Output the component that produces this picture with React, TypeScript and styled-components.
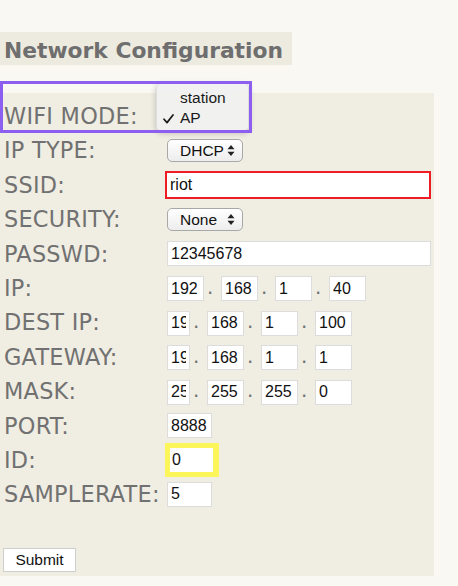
import React from 'react';
import styled, { createGlobalStyle } from 'styled-components';

const GlobalStyle = createGlobalStyle`
  html, body {
    margin: 0;
    padding: 0;
    background: #f9f8f3;
  }
  body {
    font-family: "DejaVu Sans", Verdana, sans-serif;
  }
`;

const Page = styled.div`
  padding-top: 32px;
  min-height: 586px;
  box-sizing: border-box;
`;

const Heading = styled.h1`
  display: block;
  box-sizing: border-box;
  height: 33px;
  width: 292px;
  margin: 0;
  padding: 4px 0 0 4px;
  background: #edeadf;
  color: #6e6e6e;
  font-size: 21.8px;
  font-weight: bold;
  line-height: 29px;
  white-space: nowrap;
  overflow: hidden;
`;

const Panel = styled.form`
  position: relative;
  box-sizing: border-box;
  width: 434px;
  margin-top: 28px;
  padding: 6px 0 4px 4px;
  background: #f0ede3;
`;

const FieldGrid = styled.div`
  display: grid;
  grid-template-columns: 163px 1fr;
  grid-auto-rows: 34.4px;
  align-items: center;
`;

const Label = styled.label`
  color: #717171;
  font-size: 22.4px;
  letter-spacing: 0.25px;
  line-height: 1;
  white-space: nowrap;
`;

const Field = styled.div`
  display: flex;
  align-items: center;
`;

const IpGroup = styled.div`
  display: flex;
  align-items: baseline;
`;

const TextInput = styled.input<{ $w?: number; $mark?: 'red' | 'yellow' }>`
  box-sizing: border-box;
  width: ${({ $w }) => ($w ? `${$w}px` : '264px')};
  height: 25px;
  padding: 0 3px;
  border: 1px solid #dcdcdc;
  background: #fff;
  color: #111;
  font-family: "Liberation Sans", Arial, sans-serif;
  font-size: 16px;
  outline: none;

  ${({ $mark }) => $mark === 'red' && `
    height: 28px;
    margin-left: -2px;
    border: 2px solid #ee1c24;
    padding: 0 3px;
  `}

  ${({ $mark }) => $mark === 'yellow' && `
    height: 34px;
    margin-left: -2px;
    border: 5px solid #fdf65a;
    border-right-width: 6px;
    padding: 0 2px;
  `}
`;

const Dot = styled.span`
  display: inline-block;
  width: 17px;
  padding-left: 3px;
  box-sizing: border-box;
  color: #717171;
  font-size: 20px;
`;

const SelectWrap = styled.span`
  position: relative;
  display: inline-flex;
`;

const Select = styled.select`
  appearance: none;
  -webkit-appearance: none;
  box-sizing: border-box;
  width: 76px;
  height: 23px;
  padding: 0 0 0 12px;
  border: 1px solid #a8a8a8;
  border-radius: 5px;
  background: linear-gradient(#ffffff, #ededed);
  color: #111;
  font-family: "Liberation Sans", Arial, sans-serif;
  font-size: 15.5px;
`;

const Arrows = styled.svg`
  position: absolute;
  right: 8px;
  top: 6px;
  pointer-events: none;
`;

const SubmitRow = styled.div`
  margin-top: 36px;
`;

const SubmitButton = styled.button`
  box-sizing: border-box;
  width: 73px;
  height: 24px;
  margin-left: -1px;
  padding: 0;
  border: 1px solid #cfcfcf;
  background: #fff;
  color: #111;
  font-family: "Liberation Sans", Arial, sans-serif;
  font-size: 15.5px;
`;

const Highlight = styled.div`
  position: absolute;
  top: -12px;
  left: 0;
  width: 252px;
  height: 52px;
  box-sizing: border-box;
  border: 3px solid #8d5ff1;
  pointer-events: none;
  z-index: 2;
`;

const Menu = styled.ul`
  position: absolute;
  top: -10px;
  left: 156px;
  width: 93px;
  height: 48px;
  box-sizing: border-box;
  margin: 0;
  padding: 4px 0;
  list-style: none;
  background: rgba(241, 241, 241, 0.97);
  border: 1px solid rgba(0, 0, 0, 0.08);
  border-radius: 5px;
  box-shadow: 0 2px 6px rgba(0, 0, 0, 0.22);
  font-family: "Liberation Sans", Arial, sans-serif;
  font-size: 15.5px;
  color: #1a1a1a;
  z-index: 1;
`;

const MenuItem = styled.li`
  position: relative;
  height: 20px;
  line-height: 20px;
  padding-left: 23px;
`;

const Check = styled.svg`
  position: absolute;
  left: 6px;
  top: 6px;
`;

function SelectArrows() {
  return (
    <Arrows width="8" height="11" viewBox="0 0 8 11">
      <path d="M4 0 L7.5 4.3 L0.5 4.3 Z" fill="#222" />
      <path d="M4 11 L7.5 6.7 L0.5 6.7 Z" fill="#222" />
    </Arrows>
  );
}

function SelectBox({ options }: { options: string[] }) {
  return (
    <SelectWrap>
      <Select defaultValue={options[0]}>
        {options.map((o) => <option key={o}>{o}</option>)}
      </Select>
      <SelectArrows />
    </SelectWrap>
  );
}

function IpField({ values, firstWidth }: { values: string[]; firstWidth: number }) {
  return (
    <IpGroup>
      {values.map((v, i) => (
        <React.Fragment key={i}>
          {i > 0 && <Dot>.</Dot>}
          <TextInput $w={i === 0 ? firstWidth : 37} defaultValue={v} />
        </React.Fragment>
      ))}
    </IpGroup>
  );
}

export default function App() {
  return (
    <Page>
      <GlobalStyle />
      <Heading>Network Configuration</Heading>
      <Panel onSubmit={(e) => e.preventDefault()}>
        <Highlight />
        <Menu>
          <MenuItem>station</MenuItem>
          <MenuItem>
            <Check width="11" height="10" viewBox="0 0 11 10">
              <path d="M1 5.2 L4 8.6 L10 1" fill="none" stroke="#1a1a1a" strokeWidth="1.7" strokeLinecap="round" strokeLinejoin="round" />
            </Check>
            AP
          </MenuItem>
        </Menu>
        <FieldGrid>
          <Label>WIFI MODE:</Label>
          <Field />

          <Label>IP TYPE:</Label>
          <Field><SelectBox options={['DHCP', 'Static']} /></Field>

          <Label>SSID:</Label>
          <Field><TextInput $w={266} $mark="red" defaultValue="riot" /></Field>

          <Label>SECURITY:</Label>
          <Field><SelectBox options={['None', 'WPA2']} /></Field>

          <Label>PASSWD:</Label>
          <Field><TextInput $w={264} defaultValue="12345678" /></Field>

          <Label>IP:</Label>
          <Field><IpField firstWidth={37} values={['192', '168', '1', '40']} /></Field>

          <Label>DEST IP:</Label>
          <Field><IpField firstWidth={23} values={['192', '168', '1', '100']} /></Field>

          <Label>GATEWAY:</Label>
          <Field><IpField firstWidth={23} values={['192', '168', '1', '1']} /></Field>

          <Label>MASK:</Label>
          <Field><IpField firstWidth={23} values={['255', '255', '255', '0']} /></Field>

          <Label>PORT:</Label>
          <Field><TextInput $w={45} defaultValue="8888" /></Field>

          <Label>ID:</Label>
          <Field><TextInput $w={54} $mark="yellow" defaultValue="0" /></Field>

          <Label>SAMPLERATE:</Label>
          <Field><TextInput $w={45} defaultValue="5" /></Field>
        </FieldGrid>
        <SubmitRow>
          <SubmitButton type="submit">Submit</SubmitButton>
        </SubmitRow>
      </Panel>
    </Page>
  );
}
